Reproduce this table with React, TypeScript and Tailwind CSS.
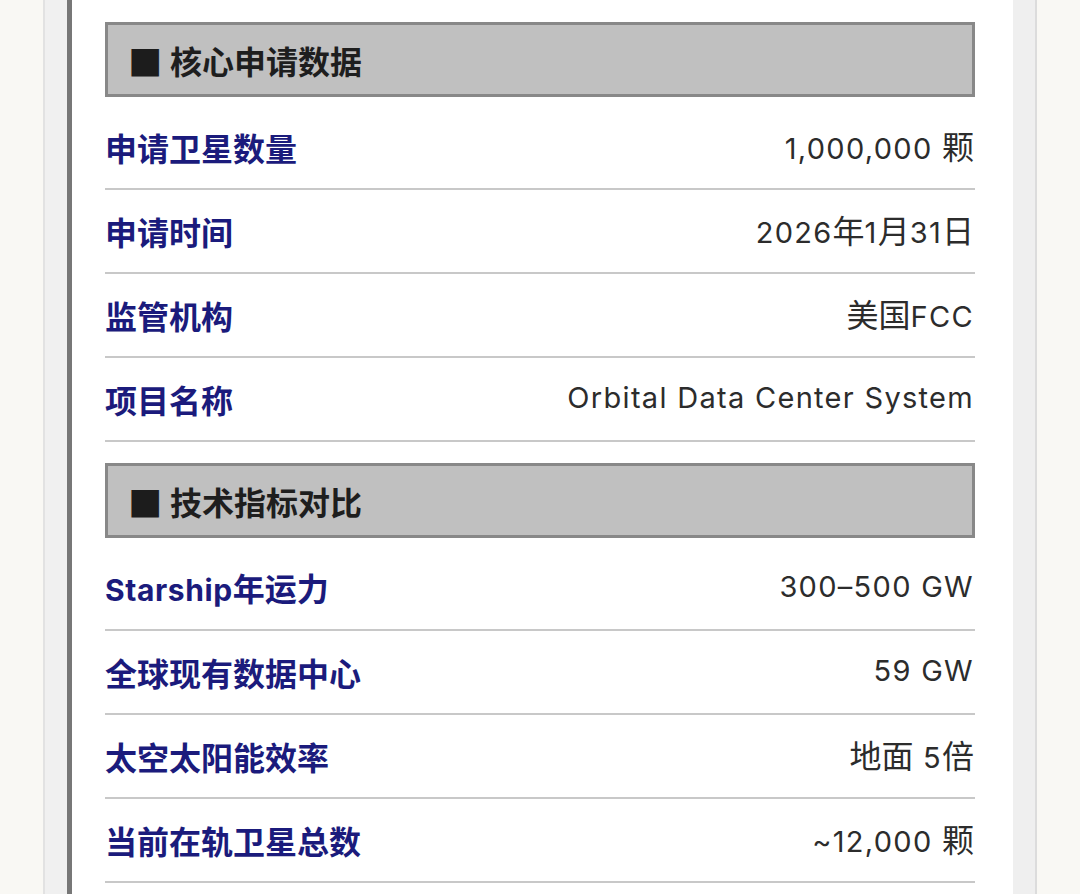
import React from "react";

const CJK = '"Noto Sans CJK SC", sans-serif';
const LAT = 'Inter, "Noto Sans CJK SC", sans-serif';

function Mixed({ text, bold }: { text: string; bold?: boolean }) {
  const parts = text.match(/[\u0020-\u007e\u2013~]+|[^\u0020-\u007e\u2013~]+/g) || [];
  return (
    <>
      {parts.map((p, i) =>
        /^[\u0020-\u007e\u2013~]+$/.test(p) ? (
          <span
            key={i}
            className={
              bold
                ? "text-[30px] font-bold tracking-[0.6px]"
                : "text-[29px] font-normal tracking-[1.3px]"
            }
            style={{ fontFamily: LAT }}
          >
            {p}
          </span>
        ) : (
          <span
            key={i}
            className={bold ? "text-[32px] font-bold" : "text-[32px] font-normal"}
            style={{ fontFamily: CJK }}
          >
            {p}
          </span>
        )
      )}
    </>
  );
}

function Header({ title, className }: { title: string; className?: string }) {
  return (
    <div
      className={
        "flex h-[75px] items-center border-[3px] border-[#888888] bg-[#c0c0c0] pl-[20px] text-[#1e1e1e] " +
        (className || "")
      }
      style={{ fontFamily: CJK }}
    >
      <span
        className="text-[36px] leading-none text-[#1c1c1c]"
        style={{ fontFamily: '"DejaVu Sans", sans-serif' }}
      >
        ■
      </span>
      <span className="ml-[8px] text-[32px] font-bold leading-none">{title}</span>
    </div>
  );
}

function Row({ label, value }: { label: string; value: string }) {
  return (
    <div className="flex h-[84px] items-center justify-between border-b-[2px] border-[#c8c8c8] pr-[1px]">
      <div className="flex items-baseline leading-none text-[#1b1b7c]">
        <Mixed text={label} bold />
      </div>
      <div className="-mt-[3px] flex items-baseline whitespace-pre leading-none text-[#2c2c2c]">
        <Mixed text={value} />
      </div>
    </div>
  );
}

export default function App() {
  const rows1 = [
    ["申请卫星数量", "1,000,000 颗"],
    ["申请时间", "2026年1月31日"],
    ["监管机构", "美国FCC"],
    ["项目名称", "Orbital Data Center System"],
  ];
  const rows2 = [
    ["Starship年运力", "300–500 GW"],
    ["全球现有数据中心", "59 GW"],
    ["太空太阳能效率", "地面 5倍"],
    ["当前在轨卫星总数", "~12,000 颗"],
  ];
  return (
    <div className="flex h-[894px] w-[1080px] overflow-hidden bg-[#f9f8f4]">
      <div className="w-[43px] shrink-0 bg-[#f9f8f4]" />
      <div className="w-[2px] shrink-0 bg-[#e2e2e2]" />
      <div className="w-[22px] shrink-0 bg-[#f0f0f0]" />
      <div className="w-[5px] shrink-0 bg-[#777777]" />
      <div className="flex w-[941px] shrink-0 flex-col bg-white pl-[33px] pr-[38px] pt-[22px]">
        <Header title="核心申请数据" className="mb-[9px]" />
        {rows1.map(([l, v]) => (
          <Row key={l} label={l} value={v} />
        ))}
        <Header title="技术指标对比" className="mb-[9px] mt-[21px]" />
        {rows2.map(([l, v]) => (
          <Row key={l} label={l} value={v} />
        ))}
      </div>
      <div className="w-[22px] shrink-0 bg-[#efefef]" />
      <div className="w-[2px] shrink-0 bg-[#dcdcdc]" />
      <div className="flex-1 bg-[#f9f8f4]" />
    </div>
  );
}
